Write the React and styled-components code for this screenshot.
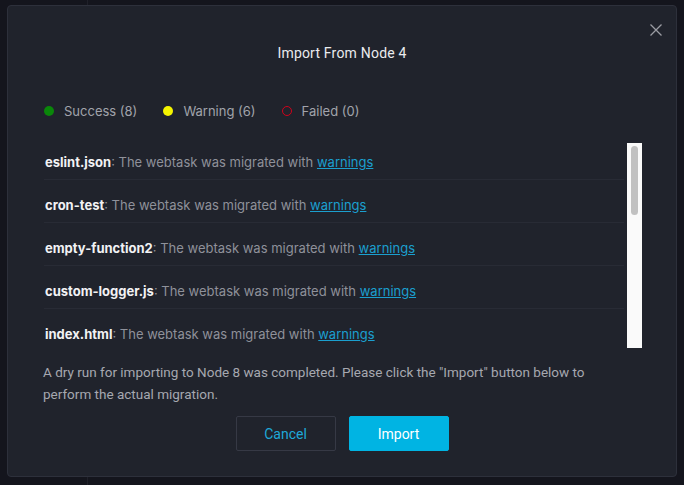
import React from 'react';
import styled, { createGlobalStyle } from 'styled-components';

const GlobalStyle = createGlobalStyle`
  html, body {
    margin: 0;
    padding: 0;
    background: #14151d;
    height: 100%;
  }
  #root { height: 100%; }
`

const Page = styled.div`
  display: flex;
  height: 485px;
  background: #14151d;
`
const Sidebar = styled.div`
  width: 87px;
  border-right: 1px solid #1f2029;
`

const Overlay = styled.div`
  position: fixed;
  inset: 0;
  display: flex;
  justify-content: center;
  padding-top: 5px;
  box-sizing: border-box;
`
const Modal = styled.div`
  position: relative;
  box-sizing: border-box;
  width: 670px;
  height: 472px;
  background: #20232c;
  border: 1px solid #2d303b;
  border-radius: 4px;
  padding: 37px 34px 0 34px;
  display: flex;
  flex-direction: column;
`
const Close = styled.button`
  position: absolute;
  top: 12px;
  right: 8px;
  width: 24px;
  height: 24px;
  padding: 0;
  border: none;
  background: transparent;
  display: flex;
  align-items: center;
  justify-content: center;
`
const Title = styled.h2`
  margin: 0;
  text-align: center;
  font-family: Roboto, "Liberation Sans", sans-serif;
  font-weight: 400;
  font-size: 14px;
  line-height: 20px;
  color: #eaebee;
  letter-spacing: 0.2px;
`
const Legend = styled.div`
  display: flex;
  align-items: center;
  margin: 38px 0 0 2px;
  font-family: Inter, "Liberation Sans", sans-serif;
  font-size: 13px;
  line-height: 20px;
  color: #a1a3ab;
`
const LegendItem = styled.div`
  display: flex;
  align-items: center;
  margin-right: 26px;
`
const Dot = styled.span`
  box-sizing: border-box;
  width: 10px;
  height: 10px;
  border-radius: 50%;
  margin-right: 10px;
  background: ${p => (p.$ring ? 'transparent' : p.$color)};
  border: ${p => (p.$ring ? `1.5px solid ${p.$color}` : 'none')};
`
const List = styled.div`
  display: flex;
  margin: 22px 0 0 2px;
  height: 205px;
`
const Rows = styled.div`
  flex: 1;
  overflow: hidden;
  font-family: Inter, "Liberation Sans", sans-serif;
  font-size: 13px;
  line-height: 16px;
  color: #8f919a;
`
const Track = styled.div`
  width: 15px;
  background: #fafafa;
  padding: 3px 4px;
  box-sizing: border-box;
`
const Thumb = styled.div`
  height: 69px;
  border-radius: 4px;
  background: #c1c1c1;
`
const Row = styled.div`
  margin-right: 3px;
  padding: 17px 0 9px 1px;
  border-bottom: 1px solid #282b35;
  white-space: nowrap;

  &:first-child {
    padding-top: 11px;
  }
`
const Name = styled.b`
  color: #f2f2f4;
  font-weight: 700;
`
const Link = styled.a`
  color: #1b9fcf;
  text-decoration: underline;
  cursor: pointer;
`
const Note = styled.p`
  margin: 13px 0 0 0;
  max-width: 575px;
  font-family: Roboto, "Liberation Sans", sans-serif;
  font-size: 13.5px;
  line-height: 22px;
  color: #a6a8b0;
  padding-left: 1px;
`
const Actions = styled.div`
  display: flex;
  justify-content: center;
  gap: 13px;
  margin-top: 11px;
`
const Button = styled.button`
  width: 100px;
  height: 35px;
  border-radius: 2px;
  font-family: Roboto, "Liberation Sans", sans-serif;
  font-size: 14px;
  cursor: pointer;
  border: 1px solid ${p => (p.$primary ? '#00b4e3' : '#363945')};
  background: ${p => (p.$primary ? '#00b4e3' : 'transparent')};
  color: ${p => (p.$primary ? '#ffffff' : '#1ea8d9')};
`

const items = [
  { name: 'eslint.json', warn: true },
  { name: 'cron-test', warn: true },
  { name: 'empty-function2', warn: true },
  { name: 'custom-logger.js', warn: true },
  { name: 'index.html', warn: true },
  { name: 'slack-notify', warn: true },
  { name: 'hello-world', warn: false },
  { name: 'github-hook', warn: false },
];

export default function App() {
  return (
    <>
      <GlobalStyle />
      <Page>
        <Sidebar />
      </Page>
      <Overlay>
        <Modal>
          <Close aria-label="Close">
            <svg width="12" height="12" viewBox="0 0 12 12">
              <path d="M0.5 0.5 L11.5 11.5 M11.5 0.5 L0.5 11.5" stroke="#9b9ca3" strokeWidth="1.3" />
            </svg>
          </Close>
          <Title>Import From Node 4</Title>
          <Legend>
            <LegendItem><Dot $color="#0a870a" />Success (8)</LegendItem>
            <LegendItem><Dot $color="#f4f400" />Warning (6)</LegendItem>
            <LegendItem><Dot $color="#d0021b" $ring />Failed (0)</LegendItem>
          </Legend>
          <List>
            <Rows>
              {items.map((it) => (
                <Row key={it.name}>
                  <Name>{it.name}</Name>: The webtask was migrated {it.warn
                    ? <>with <Link>warnings</Link></>
                    : 'successfully'}
                </Row>
              ))}
            </Rows>
            <Track>
              <Thumb />
            </Track>
          </List>
          <Note>
            A dry run for importing to Node 8 was completed. Please click the "Import" button below to perform the actual migration.
          </Note>
          <Actions>
            <Button>Cancel</Button>
            <Button $primary>Import</Button>
          </Actions>
        </Modal>
      </Overlay>
    </>
  );
}
